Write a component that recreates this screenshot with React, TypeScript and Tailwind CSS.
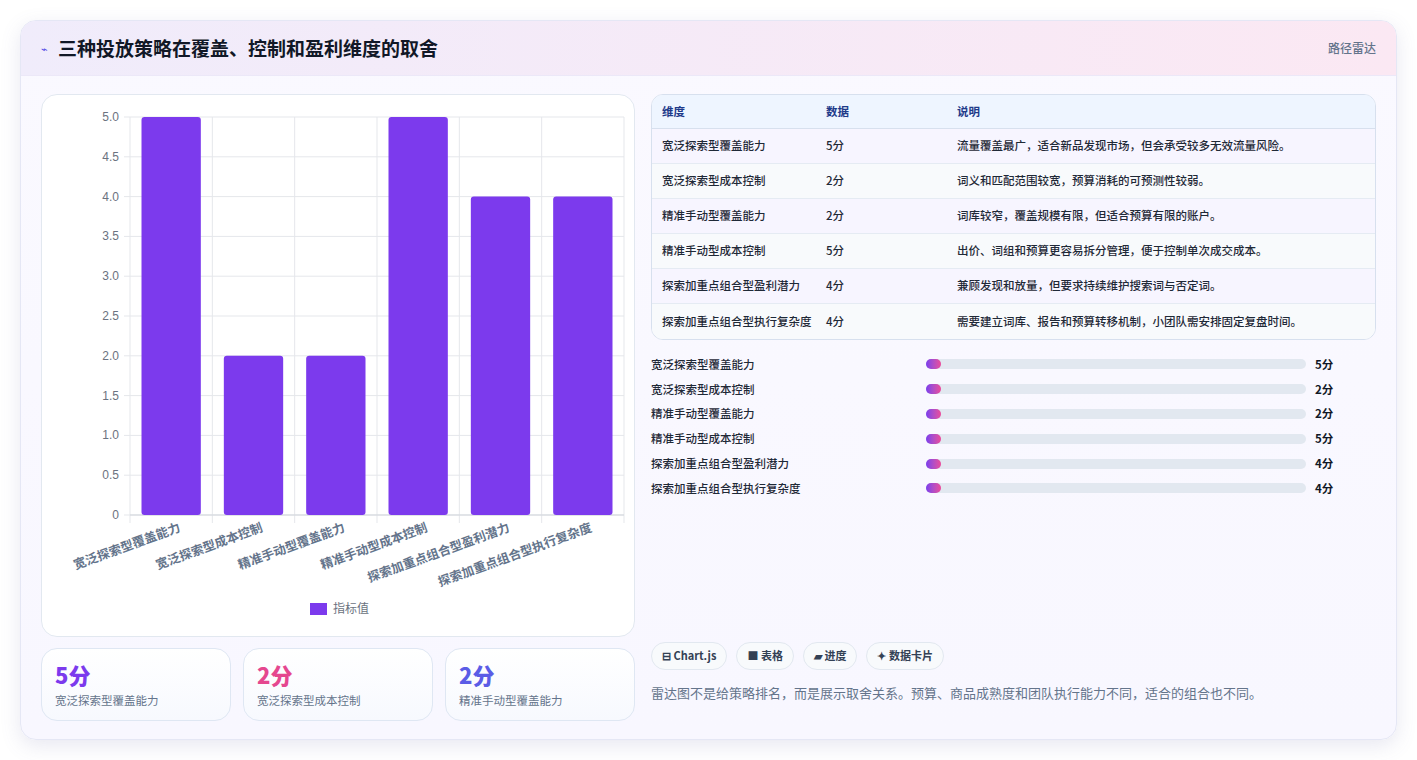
import React from "react";

const rows = [
  ["宽泛探索型覆盖能力", 5, "流量覆盖最广，适合新品发现市场，但会承受较多无效流量风险。"],
  ["宽泛探索型成本控制", 2, "词义和匹配范围较宽，预算消耗的可预测性较弱。"],
  ["精准手动型覆盖能力", 2, "词库较窄，覆盖规模有限，但适合预算有限的账户。"],
  ["精准手动型成本控制", 5, "出价、词组和预算更容易拆分管理，便于控制单次成交成本。"],
  ["探索加重点组合型盈利潜力", 4, "兼顾发现和放量，但要求持续维护搜索词与否定词。"],
  ["探索加重点组合型执行复杂度", 4, "需要建立词库、报告和预算转移机制，小团队需安排固定复盘时间。"],
] as const;

const F = { fontFamily: '"Noto Sans CJK SC","Noto Sans",sans-serif' };

function Chart() {
  const x0 = 88, x1 = 582, yTop = 22, yBot = 420;
  const cw = (x1 - x0) / 6;
  const ticks = [0, 0.5, 1, 1.5, 2, 2.5, 3, 3.5, 4, 4.5, 5];
  const y = (v: number) => yBot - (v / 5) * (yBot - yTop);
  return (
    <svg width="594" height="543" style={F}>
      {ticks.map((t) => (
        <g key={t}>
          <line x1={x0 - 6} x2={x1} y1={y(t)} y2={y(t)} stroke="#e5e7eb" />
          <text x={x0 - 11} y={y(t) + 4} fontSize="12" fill="#6b7280" textAnchor="end" fontFamily="Liberation Sans, sans-serif">
            {t === 0 ? "0" : t.toFixed(1)}
          </text>
        </g>
      ))}
      {Array.from({ length: 7 }).map((_, i) => (
        <line key={i} x1={x0 + i * cw} x2={x0 + i * cw} y1={yTop} y2={yBot + 8} stroke="#e5e7eb" />
      ))}
      <line x1={x0} x2={x1} y1={yBot} y2={yBot} stroke="#d1d5db" />
      {rows.map((r, i) => {
        const bx = x0 + i * cw + 11.5;
        return <rect key={i} x={bx} y={y(r[1])} width={cw - 23} height={yBot - y(r[1])} rx="3" fill="#7c3aed" />;
      })}
      {rows.map((r, i) => {
        const cx = x0 + i * cw + cw / 2 + 10;
        return (
          <text key={i} x={cx} y={yBot + 16} fontSize="12.5" fontWeight="600" fill="#64748b" textAnchor="end" transform={`rotate(-20 ${cx} ${yBot + 16})`}>
            {r[0]}
          </text>
        );
      })}
      <rect x="268" y="508" width="17" height="12" fill="#7c3aed" />
      <text x="291" y="518" fontSize="12" fill="#6b7280">指标值</text>
    </svg>
  );
}

export default function App() {
  return (
    <div className="min-h-screen bg-white p-5" style={F}>
      <div className="rounded-2xl border border-[#e5e7f5] bg-gradient-to-b from-[#faf9ff] to-[#f8f7ff] shadow-[0_6px_20px_rgba(100,100,160,0.15)] overflow-hidden h-[720px]">
        <div className="flex h-[55px] items-center justify-between border-b border-[#ece8f8] bg-gradient-to-r from-[#f0ecfb] to-[#fbe8f3] px-5">
          <div className="flex items-center gap-2.5">
            <span className="text-[11px] text-[#4f46e5]">⌁</span>
            <h1 className="text-[19px] font-bold text-[#111827]">三种投放策略在覆盖、控制和盈利维度的取舍</h1>
          </div>
          <span className="text-[12px] font-medium text-[#64748b]">路径雷达</span>
        </div>
        <div className="flex gap-4 px-5 pt-[18px]">
          <div className="w-[594px] shrink-0">
            <div className="h-[543px] rounded-2xl border border-[#e2e8f0] bg-white">
              <Chart />
            </div>
            <div className="mt-[11px] grid grid-cols-3 gap-3">
              {[
                ["5分", "宽泛探索型覆盖能力", "text-[#7c3aed]"],
                ["2分", "宽泛探索型成本控制", "text-[#e5478f]"],
                ["2分", "精准手动型覆盖能力", "text-[#5b5ce6]"],
              ].map(([v, l, c]) => (
                <div key={l} className="h-[73px] rounded-2xl border border-[#dfe7f3] bg-gradient-to-b from-white to-[#f7f9fe] px-[13px] pt-[10px]">
                  <div className={`text-[22px] font-extrabold leading-[30px] ${c}`}>{v}</div>
                  <div className="mt-[3px] text-[11.5px] text-[#64748b]">{l}</div>
                </div>
              ))}
            </div>
          </div>
          <div className="flex-1 min-w-0 flex flex-col">
            <div className="overflow-hidden rounded-xl border border-[#d7e0ee] bg-white">
              <div className="flex h-[34px] items-center border-b border-[#d7e0ee] bg-[#eef5ff] text-[11.5px] font-semibold text-[#1e3a8a]">
                <div className="w-[174px] pl-[10px]">维度</div>
                <div className="w-[131px]">数据</div>
                <div>说明</div>
              </div>
              {rows.map((r, i) => (
                <div key={i} className={`flex h-[35px] items-center text-[11.5px] font-medium text-[#1f2937] ${i < 5 ? "border-b border-[#e5ebf3]" : ""} ${i % 2 === 0 ? "bg-[#f7f5ff]" : "bg-[#f8fafc]"}`}>
                  <div className="w-[174px] pl-[10px]">{r[0]}</div>
                  <div className="w-[131px]">{r[1]}分</div>
                  <div>{r[2]}</div>
                </div>
              ))}
            </div>
            <div className="mt-[12px] flex flex-col">
              {rows.map((r, i) => (
                <div key={i} className="flex h-[24.8px] items-center text-[11.5px] font-medium text-[#1f2937]">
                  <div className="w-[275px]">{r[0]}</div>
                  <div className="h-[10px] w-[380px] rounded-full bg-[#e2e8f0]">
                    <div className="h-full w-[15px] rounded-full bg-gradient-to-r from-[#7c3aed] to-[#ec4899]" />
                  </div>
                  <div className="ml-[9px] font-bold text-[#111827]">{r[1]}分</div>
                </div>
              ))}
            </div>
            <div className="mt-auto mb-[19px]">
              <div className="flex gap-[9px]">
                {["⊟ Chart.js", "■ 表格", "▰ 进度", "✦ 数据卡片"].map((c) => (
                  <span key={c} className="flex h-[28px] items-center rounded-full border border-[#e2e8f0] bg-[#f8fafc] px-[10px] text-[11px] font-semibold text-[#334155]">{c}</span>
                ))}
              </div>
              <p className="mt-[13px] text-[13px] text-[#64748b]">雷达图不是给策略排名，而是展示取舍关系。预算、商品成熟度和团队执行能力不同，适合的组合也不同。</p>
            </div>
          </div>
        </div>
      </div>
    </div>
  );
}
